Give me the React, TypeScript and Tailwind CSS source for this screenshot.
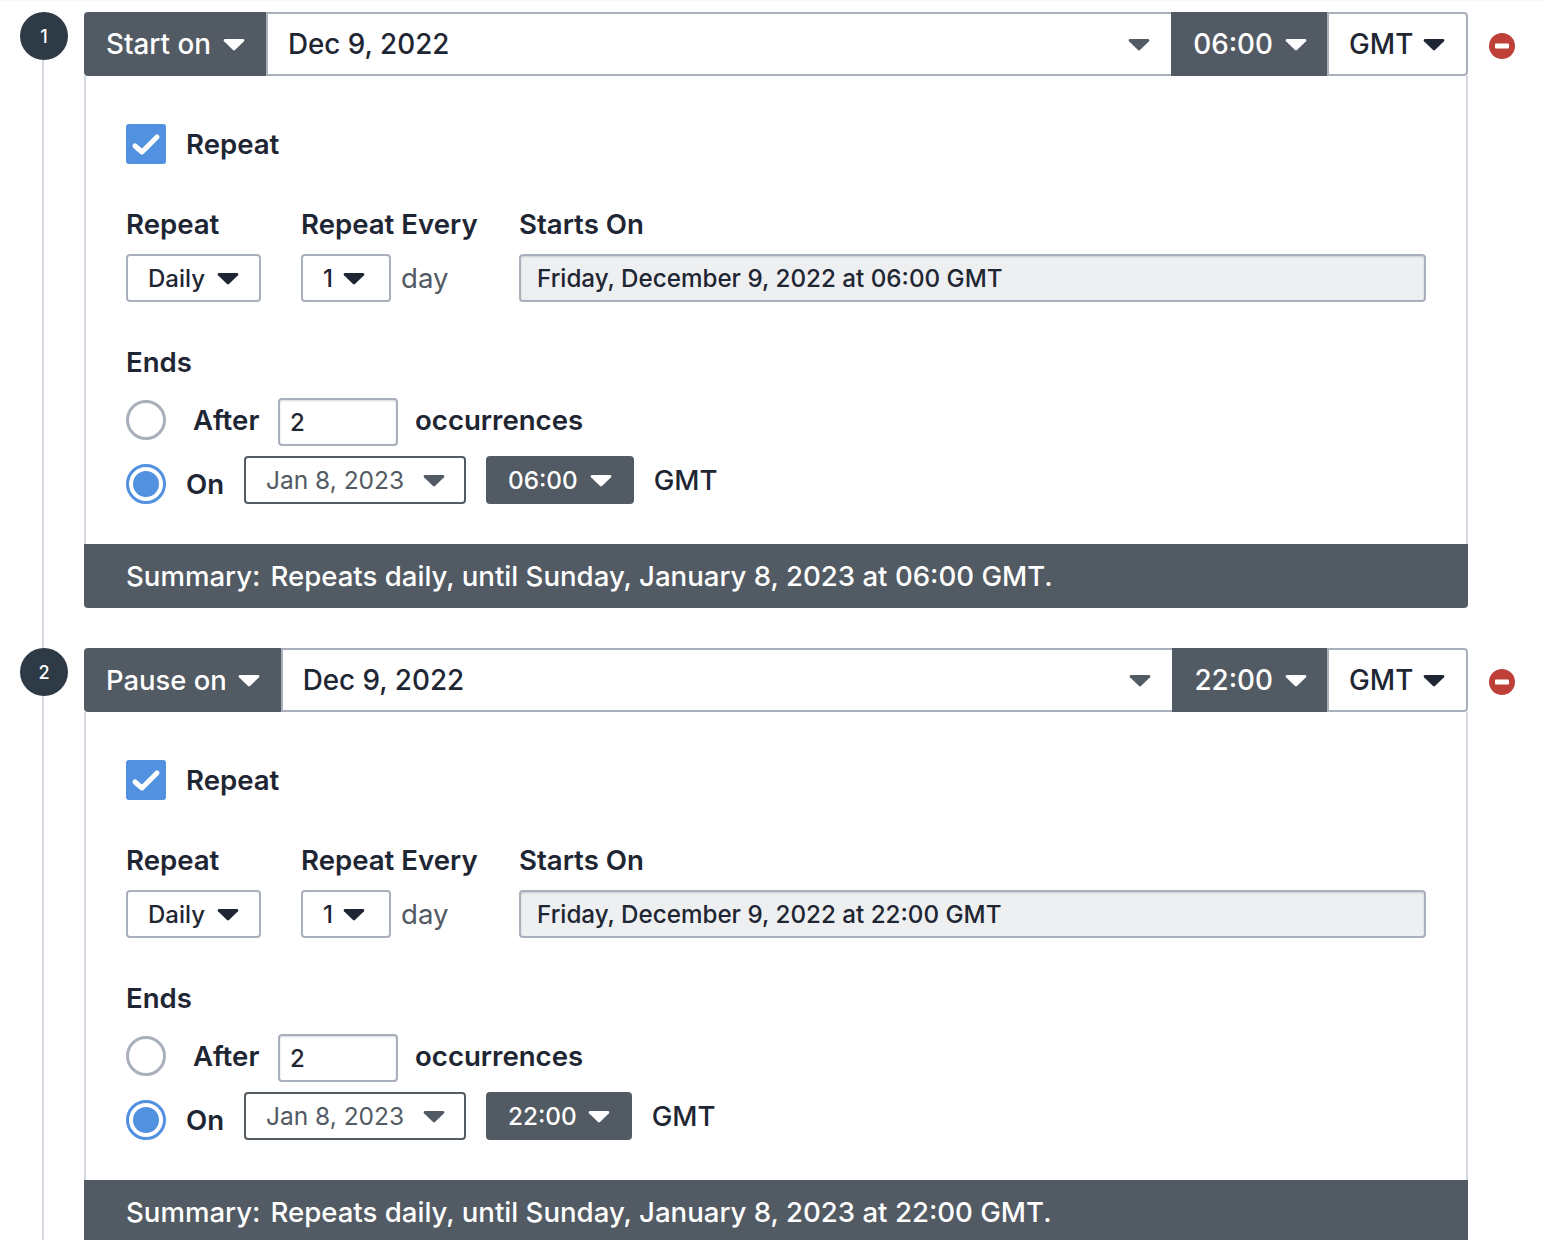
const Caret = ({ color = "#ffffff", className = "" }: { color?: string; className?: string }) => (
  <svg width="22" height="13" viewBox="0 0 22 13" className={"shrink-0 " + className}>
    <path d="M2 1h18c1.2 0 1.8 1.3 1 2.2l-9 8.8c-.6.5-1.4.5-2 0L1 3.2C.2 2.3.8 1 2 1z" fill={color} />
  </svg>
);

const Radio = ({ on }: { on?: boolean }) => (
  <span className={"flex h-10 w-10 shrink-0 items-center justify-center rounded-full border-[3px] bg-white " + (on ? "mt-2 border-[#5191e0]" : "mb-1 border-[#a9b0bb]")}>
    {on && <span className="h-[26px] w-[26px] rounded-full bg-[#5191e0]" />}
  </span>
);

const Section = ({ n, verb, verbClass, pillClass, time, long }: { n: number; verb: string; verbClass: string; pillClass: string; time: string; long: string }) => (
  <div className="flex w-full">
    <div className="flex w-[84px] shrink-0 flex-col pl-5">
      <div className="flex h-12 w-12 items-center justify-center rounded-full bg-[#2e3a46] text-[18px] font-medium text-white">{n}</div>
      <div className="ml-[22px] w-[2px] flex-1 bg-[#d5d8de]" />
    </div>
    <div className="w-[1384px] shrink-0 pb-10">
      <div className="flex h-16 items-center text-[27.8px] font-medium leading-none text-[#1f2633]">
        <div className={"flex h-full items-center rounded-l bg-[#525a63] pl-[22px] pr-[21px] text-white " + verbClass}>
          <span className="pt-[2px]">{verb}</span>
          <Caret />
        </div>
        <div className="flex h-full flex-1 items-center justify-between border-y-2 border-l-2 border-[#a9b0bb] pl-5 pr-[21px]">
          <span className="pt-[2px]">Dec 9, 2022</span>
          <Caret color="#525a63" />
        </div>
        <div className="flex h-full items-center gap-3 bg-[#525a63] pl-[22px] pr-5 text-white">
          <span className="pt-[2px]">{time}</span>
          <Caret />
        </div>
        <div className="flex h-full w-[141px] items-center gap-[10px] rounded-r border-y-2 border-x-2 border-[#a9b0bb] pl-5">
          <span className="pt-[2px]">GMT</span>
          <Caret color="#1f2633" />
        </div>
      </div>
      <div className="border-x-2 border-[#d5d8de] px-10 pb-10 pt-12 text-[#1f2633]">
        <div className="flex h-10 items-center gap-5">
          <span className="flex h-10 w-10 items-center justify-center rounded-[3px] bg-[#5191e0]">
            <svg width="40" height="40" viewBox="0 0 40 40" className="block">
              <path d="M9 22l7 6L31 13" fill="none" stroke="#fff" strokeWidth="5" strokeLinecap="round" strokeLinejoin="round" />
            </svg>
          </span>
          <span className="pt-[2px] text-[27.6px] font-semibold leading-none">Repeat</span>
        </div>
        <div className="mt-11 flex">
          <div className="w-[135px]">
            <div className="h-[46px] text-[27.6px] font-semibold leading-[32px]">Repeat</div>
            <div className="flex h-12 items-center gap-3 rounded border-2 border-[#a9b0bb] pl-5 pt-[2px] text-[24px] font-medium">
              Daily
              <Caret color="#1f2633" className="-mt-[2px]" />
            </div>
          </div>
          <div className="ml-10 w-[177px]">
            <div className="h-[46px] whitespace-nowrap text-[27.6px] font-semibold leading-[32px]">Repeat Every</div>
            <div className="flex items-center gap-[10px]">
              <div className="flex h-12 w-[90px] items-center gap-[10px] rounded border-2 border-[#a9b0bb] pl-5 pt-[2px] text-[24px] font-medium">
                1
                <Caret color="#1f2633" className="-mt-[2px]" />
              </div>
              <span className="pt-[2px] text-[27.6px] text-[#525a63]">day</span>
            </div>
          </div>
          <div className="ml-[41px] flex-1">
            <div className="h-[46px] text-[27.6px] font-semibold leading-[32px]">Starts On</div>
            <div className="flex h-12 items-center rounded border-2 border-[#a9b0bb] bg-[#eeeff1] pl-4 pt-[3px] text-[24.2px] font-medium shadow-[inset_0_1px_2px_rgba(0,0,0,0.15)]">
              {long}
            </div>
          </div>
        </div>
        <div className="mt-11 text-[27.6px] font-semibold leading-[32px]">Ends</div>
        <div className="mt-5 flex h-12 items-center text-[27.6px] font-semibold">
          <Radio />
          <span className="mb-[2px] ml-[27px] w-[68px]">After</span>
          <input
            readOnly
            value="2"
            className="ml-[17px] h-12 w-[120px] rounded border-2 border-[#a9b0bb] px-[10px] text-[24px] font-medium text-[#1f2633] shadow-[inset_0_1px_2px_rgba(0,0,0,0.15)] outline-none"
          />
          <span className="mb-[2px] ml-[17px]">occurrences</span>
        </div>
        <div className="mt-[10px] flex h-12 items-center text-[27.6px] font-semibold">
          <Radio on />
          <span className="ml-5 mt-[9px] w-[39px]">On</span>
          <div className="ml-[19px] flex h-12 w-[222px] items-center justify-between rounded border-2 border-[#525a63] pl-5 pr-[19px] text-[24.5px] font-normal text-[#525a63]">
            Jan 8, 2023
            <Caret color="#525a63" />
          </div>
          <div className={"ml-5 flex h-12 items-center rounded bg-[#525a63] px-[22px] text-[24.3px] font-medium text-white " + pillClass}>
            {time}
            <Caret />
          </div>
          <span className="ml-5 pt-[2px] font-medium">GMT</span>
        </div>
      </div>
      <div className="flex h-16 items-center gap-[10px] rounded-b bg-[#525a63] pl-[42px] pt-[2px] text-[27.6px] font-medium text-white">
        <span>Summary:</span>
        <span>Repeats daily, until Sunday, January 8, 2023 at {time} GMT.</span>
      </div>
    </div>
    <div className="ml-[21px] mt-[21px]">
      <svg width="26" height="26" viewBox="0 0 26 26" className="block">
        <circle cx="13" cy="13" r="13" fill="#bf4038" />
        <rect x="6" y="10.5" width="14" height="5" rx="1" fill="#fff" />
      </svg>
    </div>
  </div>
);

export default function App() {
  return (
    <div className="h-[1240px] overflow-hidden border-t border-[#f8f8f8] bg-white pt-[11px] font-['Inter',sans-serif]">
      <Section n={1} verb="Start on" verbClass="gap-3" pillClass="gap-3" time="06:00" long="Friday, December 9, 2022 at 06:00 GMT" />
      <Section n={2} verb="Pause on" verbClass="gap-[11px] text-[27.4px]" pillClass="gap-[11px]" time="22:00" long="Friday, December 9, 2022 at 22:00 GMT" />
    </div>
  );
}
